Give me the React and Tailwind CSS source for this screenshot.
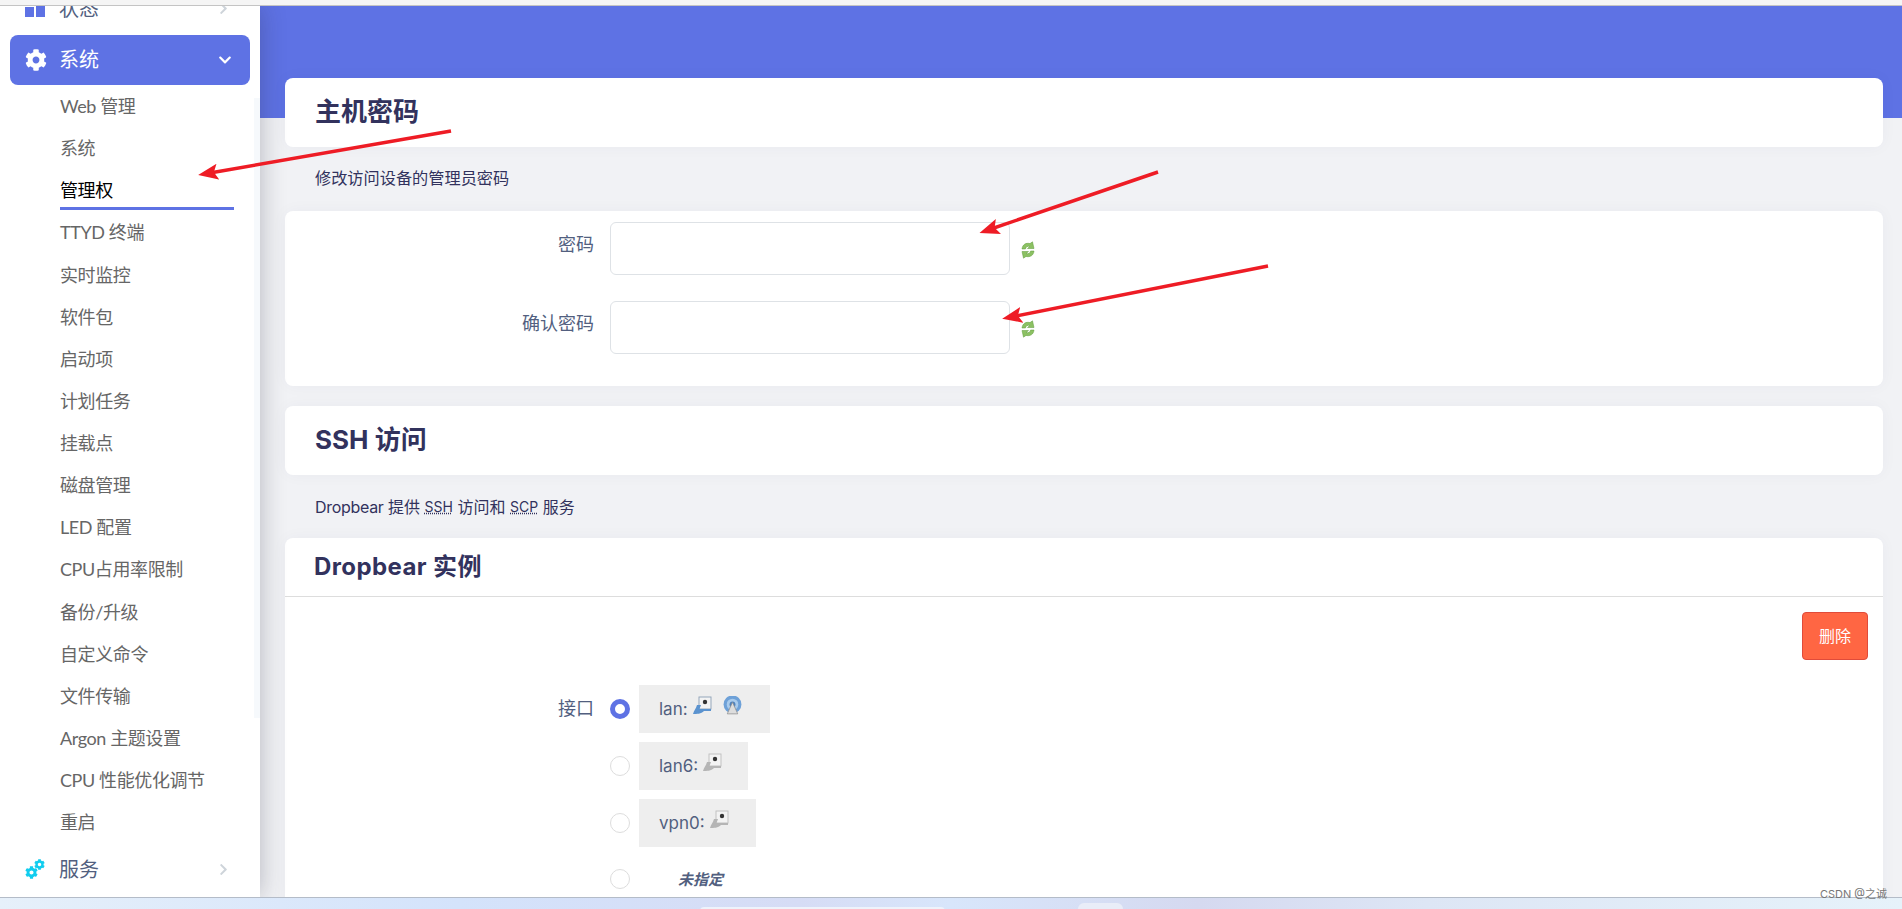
import React from 'react'
import { FaCog, FaChevronRight, FaChevronDown } from 'react-icons/fa'

const subItems = ['Web 管理', '系统', '管理权', 'TTYD 终端', '实时监控', '软件包', '启动项', '计划任务', '挂载点', '磁盘管理', 'LED 配置', 'CPU占用率限制', '备份/升级', '自定义命令', '文件传输', 'Argon 主题设置', 'CPU 性能优化调节', '重启']

function RefreshIcon({ className }) {
  return (
    <svg viewBox="0 0 14 18" className={className}>
      <path d="M1 8 C1.5 3.5 5 1.5 9 2.6 L11.5 0.8 L13 7.5 L6.5 7.5 L8.8 5.4 C6.5 4.8 5 6 4.4 8 Z" fill="#8cc163" stroke="#5c9a38" strokeWidth="0.5" />
      <path d="M13 10 C12.5 14.5 9 16.5 5 15.4 L2.5 17.2 L1 10.5 L7.5 10.5 L5.2 12.6 C7.5 13.2 9 12 9.6 10 Z" fill="#8cc163" stroke="#5c9a38" strokeWidth="0.5" />
    </svg>
  )
}

function PortIcon({ active }) {
  const main = active ? '#5b93cf' : '#b5b5b5'
  return (
    <svg viewBox="0 0 20 20" className="-mt-[7px] h-5 w-5">
      <rect x="7" y="1" width="12" height="12" fill="#f3f3f3" stroke={active ? '#8c9fb5' : '#bdbdbd'} strokeWidth="0.9" />
      <circle cx="13" cy="6" r="2.2" fill="#333" />
      <path d="M5 9 L9 9 L7.5 13 L19 13 L19 15 L12 15 C9 18 5 18 1 18 C2 14 4 13 5 9 Z" fill={main} />
    </svg>
  )
}

function WifiIcon() {
  return (
    <svg viewBox="0 0 20 20" className="-mt-[7px] h-[21px] w-[21px]">
      <circle cx="10" cy="8" r="8.5" fill="#6ea1d8" />
      <circle cx="10" cy="8" r="5.5" fill="#a9cbec" />
      <circle cx="10" cy="8" r="2.8" fill="#4f82bd" />
      <path d="M10 6 L5 17 L15 17 Z" fill="#dddddd" stroke="#8c8c8c" strokeWidth="0.7" />
    </svg>
  )
}

function Card({ className, children }) {
  return <div className={`rounded-lg bg-white shadow-[0_0_16px_rgba(50,50,93,0.04)] ${className}`}>{children}</div>
}

function Radio({ checked }) {
  return checked
    ? <span className="h-5 w-5 shrink-0 rounded-full border-[5px] border-[#5e72e4] bg-white" />
    : <span className="h-5 w-5 shrink-0 rounded-full border border-[#dddddd] bg-white" />
}

function Row({ children, boxClass, checked }) {
  return (
    <div className="mb-[9px] flex items-center gap-[9px]">
      <Radio checked={checked} />
      <div className={`flex h-12 items-center bg-[#eeeeee] pl-5 pt-px text-[17px] text-[#525f7f] ${boxClass}`}>{children}</div>
    </div>
  )
}

function MenuChevron() {
  return <FaChevronRight className="ml-auto h-[13px] w-[13px] text-[#ced4da]" />
}

export default function App() {
  return (
    <div className="relative flex h-[909px] w-[1902px] flex-col overflow-hidden bg-white text-[#32325d]" style={{ fontFamily: 'Inter, "Noto Sans CJK SC", sans-serif' }}>
      <div className="h-[6px] shrink-0 border-b border-[#c4c4c4] bg-[#f5f5f5]" />

      <div className="relative flex h-[891px] shrink-0 overflow-hidden bg-[#f1f2f5]">
        {/* Sidebar */}
        <aside className="relative z-10 w-[260px] shrink-0 overflow-hidden bg-white shadow-[0_0_24px_rgba(40,40,60,0.3)]" style={{ fontFamily: 'Lato, "Noto Sans CJK SC", sans-serif' }}>
          <div className="-mt-[23px] flex h-[50px] items-center pl-[25px] pr-[30px] text-xl text-[#525f7f]">
            <svg viewBox="0 0 20 18" className="mr-[14px] h-[18px] w-5 fill-[#5e72e4]">
              <rect x="0" y="0" width="9" height="6" />
              <rect x="0" y="8" width="9" height="10" />
              <rect x="11" y="0" width="9" height="18" />
            </svg>
            <span>状态</span>
            <MenuChevron />
          </div>
          <div className="mx-[10px] mt-[2px] flex h-[50px] items-center rounded-lg bg-[#5e72e4] pb-[2px] pl-[15px] pr-[18px] text-xl text-white">
            <FaCog className="mr-3 mt-[2px] h-[22px] w-[22px]" />
            <span>系统</span>
            <FaChevronDown className="ml-auto mt-[2px] h-[14px] w-[14px]" />
          </div>
          <ul className="flex flex-col">
            {subItems.map((item) => (
              <li key={item} className="h-[42.13px] pl-[60px] pr-[26px] text-lg leading-[42px] tracking-[-0.4px] text-[#666666]">
                {item === '管理权'
                  ? <span className="block h-[41px] border-b-[3px] border-[#5e72e4] leading-[42px] text-black">{item}</span>
                  : item}
              </li>
            ))}
          </ul>
          <div className="mt-px flex h-[50px] items-center pl-[25px] pr-[30px] text-xl text-[#525f7f]">
            {/* two small gears, the lower one bigger */}
            <span className="relative mr-[14px] h-5 w-5 shrink-0 text-[#11cdef]">
              <FaCog className="absolute bottom-0 left-0 h-[13px] w-[13px]" />
              <FaCog className="absolute right-0 top-0 h-[11px] w-[11px]" />
            </span>
            <span>服务</span>
            <MenuChevron />
          </div>
          <div className="absolute right-0 top-[92px] h-[620px] w-[6px] bg-[#f6f9fc]" />
        </aside>

        {/* Main */}
        <main className="relative min-w-0 flex-1">
          <div className="absolute inset-x-0 top-0 h-[112px] bg-[#5e72e4]" />
          <div className="relative ml-[25px] mr-[19px] pt-[72px]">
            <Card className="flex h-[69px] items-center pb-[3px] pl-[30px]">
              <h2 className="text-[26px] font-bold text-[#32325d]">主机密码</h2>
            </Card>
            <p className="flex h-[64px] items-center pb-[2px] pl-[30px] text-[16.2px]">修改访问设备的管理员密码</p>
            <Card className="flex h-[175px] flex-col gap-[26px] pt-[11px]">
              {['密码', '确认密码'].map((label) => (
                <div key={label} className="flex items-center">
                  <label className="mb-[7px] w-[309px] text-right text-lg text-[#525f7f]">{label}</label>
                  <input type="password" className="ml-4 h-[53px] w-[400px] rounded-md border border-[#dee2e6] bg-white" />
                  <RefreshIcon className="ml-[11px] mt-[2px] h-[18px] w-[14px]" />
                </div>
              ))}
            </Card>
            <Card className="mt-5 flex h-[69px] items-center pb-[3px] pl-[30px]">
              <h2 className="text-[26px] font-bold text-[#32325d]">SSH 访问</h2>
            </Card>
            <p className="flex h-[63px] items-center pl-[30px] text-base">
              <span className="tracking-[-0.3px]">Dropbear</span>&nbsp;提供&nbsp;<abbr className="text-sm underline decoration-dotted">SSH</abbr>&nbsp;访问和&nbsp;<abbr className="text-sm underline decoration-dotted">SCP</abbr>&nbsp;服务
            </p>
            <Card className="h-[400px] rounded-b-none">
              <div className="flex h-[59px] items-center border-b border-[#dddddd] pl-[29px]">
                <h3 className="text-2xl font-bold tracking-[0.4px] text-[#32325d]">Dropbear 实例</h3>
              </div>
              <div className="flex justify-end pr-[15px] pt-[15px]">
                <button className="h-12 w-[66px] rounded border border-[#e04b3a] bg-[#ff6643] text-base text-white">删除</button>
              </div>
              <div className="mt-[25px] flex">
                <label className="mt-[10px] w-[309px] text-right text-lg text-[#525f7f]">接口</label>
                <div className="ml-4 flex flex-col">
                  <Row checked boxClass="w-[131px]"><span>lan:</span><span className="ml-1"><PortIcon active /></span><span className="ml-[10px]"><WifiIcon /></span></Row>
                  <Row boxClass="w-[109px]"><span>lan6:</span><span className="ml-1"><PortIcon /></span></Row>
                  <Row boxClass="w-[117px]"><span>vpn0:</span><span className="ml-1"><PortIcon /></span></Row>
                  <div className="mt-[11px] flex items-center gap-[9px]">
                    <Radio />
                    <span className="ml-[39px] pt-[2px] text-[15px] font-bold italic text-[#525f7f]">未指定</span>
                  </div>
                </div>
              </div>
            </Card>
          </div>
        </main>
      </div>

      {/* Desktop strip at the bottom of the capture */}
      <div className="relative flex-1 border-t border-[#b4bcc8] bg-[linear-gradient(90deg,#e6f0fa_0%,#d4e3fb_24%,#d6dcf5_42%,#d8e6fb_50%,#d5d9f0_63%,#dde6f5_75%,#e6f2fa_100%)]">
        <div className="absolute left-[700px] top-[9px] h-2 w-[245px] rounded-t bg-[#eef3fb]" />
        <div className="absolute left-[1078px] top-[5px] h-3 w-[45px] rounded-t-md bg-[#e9edf8]" />
      </div>

      <span className="absolute right-[15px] top-[887px] z-20 text-[11px] leading-[14px] text-[#777777]">CSDN @之诚</span>

      {/* Red annotation arrows */}
      <svg className="pointer-events-none absolute left-0 top-0 z-30 h-[909px] w-[1902px]" viewBox="0 0 1902 909">
        <defs>
          <marker id="head" markerUnits="userSpaceOnUse" markerWidth="20" markerHeight="18" refX="11" refY="9" orient="auto">
            <path d="M0 1 L20 9 L0 17 L4 9 Z" fill="#ee1c25" />
          </marker>
        </defs>
        <line x1="451" y1="131" x2="207" y2="173.5" stroke="#ee1c25" strokeWidth="3.5" markerEnd="url(#head)" />
        <line x1="1158" y1="172" x2="988" y2="230" stroke="#ee1c25" strokeWidth="3.5" markerEnd="url(#head)" />
        <line x1="1268" y1="266" x2="1011" y2="317" stroke="#ee1c25" strokeWidth="3.5" markerEnd="url(#head)" />
      </svg>
    </div>
  )
}
